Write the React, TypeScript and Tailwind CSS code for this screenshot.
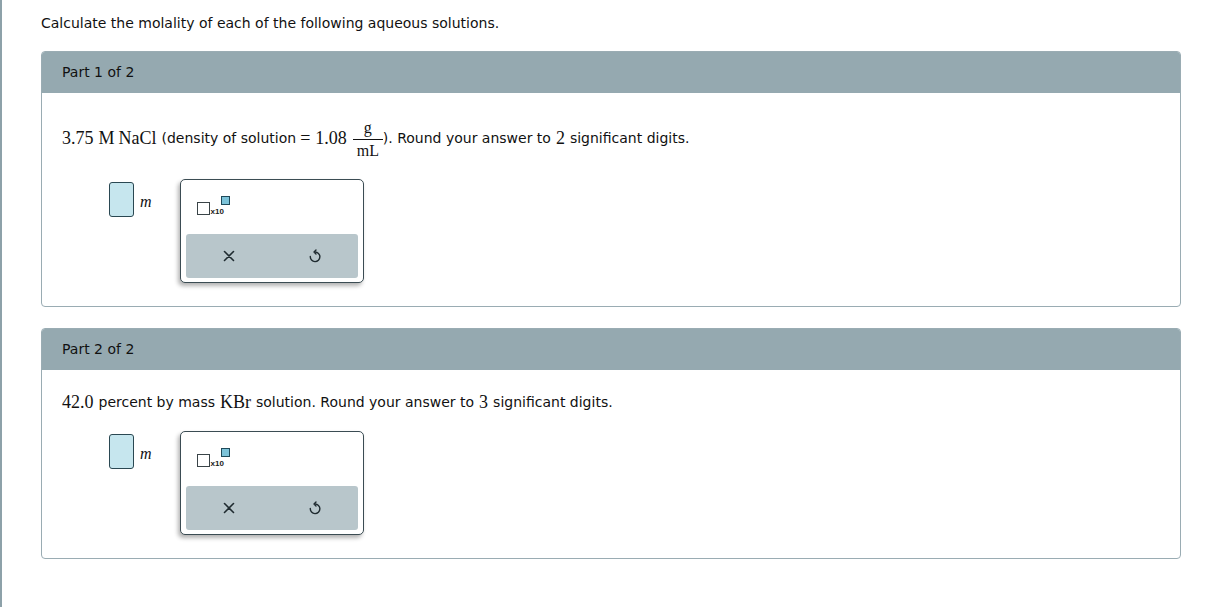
import React from "react";

const sans = "font-['Verdana','DejaVu_Sans',sans-serif]";
const serif = "font-['Liberation_Serif','Times_New_Roman',serif]";

function XIcon() {
  return (
    <svg width="12" height="12" viewBox="0 0 12 12" fill="none" stroke="#1f2b30" strokeWidth="1.6" strokeLinecap="round">
      <path d="M1.5 1.5 L10.5 10.5 M10.5 1.5 L1.5 10.5" />
    </svg>
  );
}

function UndoIcon() {
  return (
    <svg width="12" height="14" viewBox="0 0 12 14" fill="none" stroke="#1f2b30" strokeWidth="1.4" strokeLinecap="round" strokeLinejoin="round">
      <path d="M6 3 A4.8 4.8 0 1 1 1.3 7.5" />
      <path d="M7 1 L5 3 L7 5" />
    </svg>
  );
}

function AnswerRow() {
  return (
    <div className="flex items-start pl-[67px]">
      <div className="mt-[3px] w-[25px] h-[35px] rounded-[3px] border border-[#2a4852] bg-[#c6e6ee]" />
      <div className={`${serif} italic text-[16px] leading-none ml-[6px] mt-[15px] text-[#111]`}>m</div>
      <div className="ml-[28px] w-[184px] h-[104px] rounded-[5px] border border-[#3b4c53] bg-white shadow-[-2px_3px_4px_rgba(0,0,0,0.3)] px-[5px] pb-[4px] flex flex-col">
        <div className="h-[54px] shrink-0 relative">
          <div className="absolute left-[11px] top-[22px] w-[13px] h-[13px] border-[1.5px] border-[#3a4448] bg-white" />
          <div className="absolute left-[25px] top-[28px] text-[8px] leading-none text-[#222] font-['Liberation_Sans',sans-serif] font-bold">x10</div>
          <div className="absolute left-[35px] top-[16px] w-[9px] h-[9px] border-[1.5px] border-[#1f4a5a] bg-[#7cc3d9]" />
        </div>
        <div className="flex-1 rounded-[3px] bg-[#b8c6cb] flex items-center">
          <div className="w-[86px] flex justify-center"><XIcon /></div>
          <div className="w-[86px] flex justify-center"><UndoIcon /></div>
        </div>
      </div>
    </div>
  );
}

function Panel({ part, children, gap }: { part: string; children: React.ReactNode; gap: string }) {
  return (
    <div className="w-[1140px] rounded-[4px] border border-[#9aacb3] overflow-hidden bg-white">
      <div className={`h-[41px] bg-[#95a9b0] flex items-center pl-[20px] text-[14px] text-[#111] ${sans}`}>{part}</div>
      <div className="pt-[23px] pb-[23px]">
        {children}
        <div className={gap}>
          <AnswerRow />
        </div>
      </div>
    </div>
  );
}

export default function App() {
  return (
    <div className={`relative w-[1206px] h-[607px] bg-white ${sans} text-[#111]`}>
      <div className="absolute left-0 top-0 w-[2px] h-full bg-[#8da1a9]" />
      <div className="pl-[41px] pt-[14px]">
        <div className="text-[14px] leading-[18px]">Calculate the molality of each of the following aqueous solutions.</div>
        <div className="mt-[19px]">
          <Panel part="Part 1 of 2" gap="mt-[19px]">
            <div className="h-[44px] flex items-center pl-[20px] text-[14px]">
              <span className={`${serif} text-[18px]`}>3.75</span>
              <span className={`${serif} text-[18px] ml-[5px]`}>M</span>
              <span className={`${serif} text-[18px] ml-[4px]`}>NaCl</span>
              <span className="ml-[5px]">(density of solution</span>
              <span className={`${serif} text-[18px] ml-[4px]`}>=</span>
              <span className={`${serif} text-[18px] ml-[5px]`}>1.08</span>
              <span className="inline-flex flex-col items-center ml-[6px] mt-[3px]">
                <span className={`${serif} text-[16px] leading-[18px] mb-[2px]`}>g</span>
                <span className="w-[30px] h-[1px] bg-[#111]" />
                <span className={`${serif} text-[16px] leading-[18px] mt-[2px]`}>mL</span>
              </span>
              <span>). Round your answer to</span>
              <span className={`${serif} text-[18px] mx-[5px]`}>2</span>
              <span>significant digits.</span>
            </div>
          </Panel>
        </div>
        <div className="mt-[21px]">
          <Panel part="Part 2 of 2" gap="mt-[20px]">
            <div className="h-[18px] flex items-center pl-[20px] text-[14px]">
              <span className={`${serif} text-[18px]`}>42.0</span>
              <span className="ml-[5px]">percent by mass</span>
              <span className={`${serif} text-[18px] mx-[5px]`}>KBr</span>
              <span>solution. Round your answer to</span>
              <span className={`${serif} text-[18px] mx-[5px]`}>3</span>
              <span>significant digits.</span>
            </div>
          </Panel>
        </div>
      </div>
    </div>
  );
}
